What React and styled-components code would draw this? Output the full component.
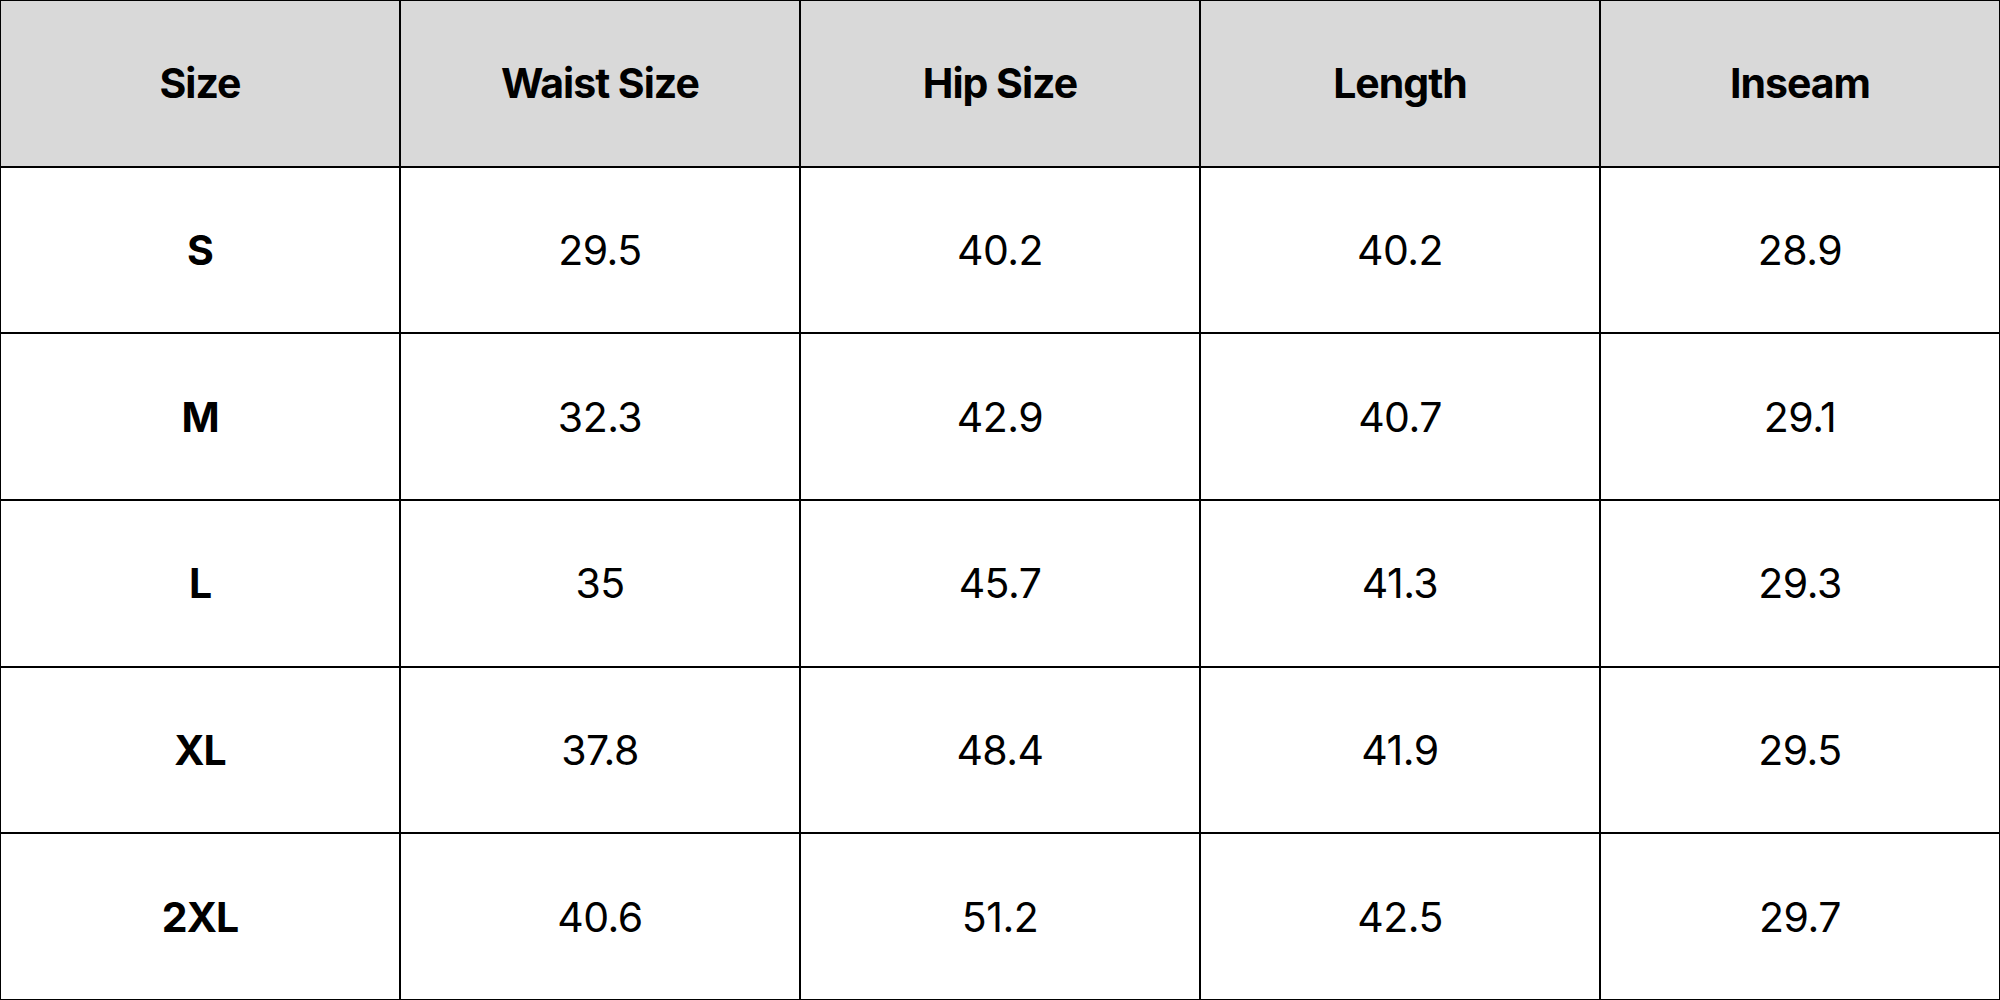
import React from "react";
import styled, { createGlobalStyle } from "styled-components";

const Global = createGlobalStyle`
  html, body { margin: 0; padding: 0; background: #fff; }
  body { font-family: "Inter", "Lato", "Liberation Sans", sans-serif; }
`;

const Grid = styled.div`
  width: 2000px;
  height: 1000px;
  box-sizing: border-box;
  display: grid;
  grid-template-columns: repeat(5, 1fr);
  grid-template-rows: repeat(6, 1fr);
  gap: 2px;
  padding: 1px;
  background: #000;
`;

const Cell = styled.div`
  display: flex;
  align-items: center;
  justify-content: center;
  background: ${(p) => (p.$head ? "#d9d9d9" : "#ffffff")};
  color: #000;
  font-size: 41px;
  font-weight: ${(p) => (p.$bold ? 700 : 400)};
  letter-spacing: ${(p) => (p.$bold ? "-1px" : "-0.5px")};
`;

const headers = ["Size", "Waist Size", "Hip Size", "Length", "Inseam"];
const rows = [
  ["S", "29.5", "40.2", "40.2", "28.9"],
  ["M", "32.3", "42.9", "40.7", "29.1"],
  ["L", "35", "45.7", "41.3", "29.3"],
  ["XL", "37.8", "48.4", "41.9", "29.5"],
  ["2XL", "40.6", "51.2", "42.5", "29.7"],
];

export default function App() {
  return (
    <>
      <Global />
      <Grid>
        {headers.map((h) => (
          <Cell key={h} $head $bold>
            {h}
          </Cell>
        ))}
        {rows.map((r) =>
          r.map((v, i) => (
            <Cell key={r[0] + i} $bold={i === 0}>
              {v}
            </Cell>
          ))
        )}
      </Grid>
    </>
  );
}
